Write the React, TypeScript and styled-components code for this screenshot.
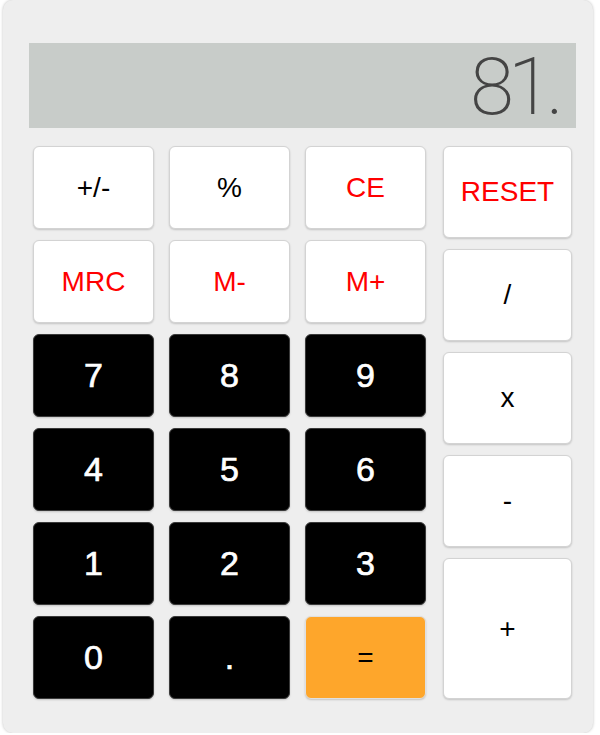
import React, { FC } from 'react'
import styled, { createGlobalStyle, css } from 'styled-components'

type Variant = 'light' | 'dark' | 'accent'

interface Key {
  label: string
  variant?: Variant
  red?: boolean
  tall?: boolean
}

const leftKeys: Key[] = [
  { label: '+/-' },
  { label: '%' },
  { label: 'CE', red: true },
  { label: 'MRC', red: true },
  { label: 'M-', red: true },
  { label: 'M+', red: true },
  { label: '7', variant: 'dark' },
  { label: '8', variant: 'dark' },
  { label: '9', variant: 'dark' },
  { label: '4', variant: 'dark' },
  { label: '5', variant: 'dark' },
  { label: '6', variant: 'dark' },
  { label: '1', variant: 'dark' },
  { label: '2', variant: 'dark' },
  { label: '3', variant: 'dark' },
  { label: '0', variant: 'dark' },
  { label: '.', variant: 'dark' },
  { label: '=', variant: 'accent' },
]

const rightKeys: Key[] = [
  { label: 'RESET', red: true },
  { label: '/' },
  { label: 'x' },
  { label: '-' },
  { label: '+', tall: true },
]

const App: FC = () => {
  return (
    <>
      <GlobalStyle />
      <S.Calculator>
        <S.Display>81.</S.Display>
        <S.Keypad>
          <S.MainKeys>
            {leftKeys.map((k) => (
              <S.Button key={k.label} $variant={k.variant || 'light'} $red={k.red}>
                {k.label}
              </S.Button>
            ))}
          </S.MainKeys>
          <S.SideKeys>
            {rightKeys.map((k) => (
              <S.SideButton key={k.label} $variant="light" $red={k.red} $tall={k.tall}>
                {k.label}
              </S.SideButton>
            ))}
          </S.SideKeys>
        </S.Keypad>
      </S.Calculator>
    </>
  )
}

const GlobalStyle = createGlobalStyle`
  html, body {
    margin: 0;
    background: #ffffff;
  }
`

const variants = {
  light: css`
    background: #ffffff;
    border-color: #d3d3d3;
    color: #000000;
    font-size: 28px;
  `,
  dark: css`
    background: #000000;
    border-color: #3a3a3a;
    color: #ffffff;
    font-size: 34px;
    -webkit-text-stroke: 0.7px #ffffff;
  `,
  accent: css`
    background: #fea62b;
    border-color: #e0e0e0;
    color: #000000;
    font-size: 28px;
  `,
}

const S = {
  Calculator: styled.div`
    box-sizing: border-box;
    width: 590px;
    height: 733px;
    margin-left: 3px;
    padding: 43px 17px 0 26px;
    background: #eeeeee;
    border-radius: 10px;
    box-shadow: 0 0 3px rgba(0, 0, 0, 0.25);
  `,
  Display: styled.div`
    height: 85px;
    padding-right: 18px;
    background: #c8ccc9;
    color: #444444;
    font-family: Roboto, 'Liberation Sans', sans-serif;
    font-weight: 200;
    font-size: 80px;
    letter-spacing: -6px;
    line-height: 88px;
    text-align: right;
  `,
  Keypad: styled.div`
    display: flex;
    align-items: flex-start;
    margin-top: 18px;
    padding-left: 4px;
  `,
  MainKeys: styled.div`
    display: grid;
    grid-template-columns: repeat(3, 121px);
    grid-auto-rows: 83px;
    column-gap: 15px;
    row-gap: 11px;
  `,
  SideKeys: styled.div`
    display: flex;
    flex-direction: column;
    gap: 11px;
    width: 129px;
    margin-left: 17px;
  `,
  Button: styled.button<{ $variant: Variant; $red?: boolean }>`
    box-sizing: border-box;
    display: flex;
    align-items: center;
    justify-content: center;
    padding: 0;
    border: 1px solid;
    border-radius: 6px;
    box-shadow: 0 1px 2px rgba(0, 0, 0, 0.18);
    font-family: 'Liberation Sans', Arial, sans-serif;
    font-weight: normal;
    cursor: pointer;
    ${(p) => variants[p.$variant]}
    ${(p) => p.$red && 'color: #ff0000;'}
  `,
  SideButton: styled.button<{ $variant: Variant; $red?: boolean; $tall?: boolean }>`
    box-sizing: border-box;
    display: flex;
    align-items: center;
    justify-content: center;
    height: ${(p) => (p.$tall ? 141 : 92)}px;
    padding: 0;
    border: 1px solid;
    border-radius: 6px;
    box-shadow: 0 1px 2px rgba(0, 0, 0, 0.18);
    font-family: 'Liberation Sans', Arial, sans-serif;
    cursor: pointer;
    ${(p) => variants[p.$variant]}
    ${(p) => p.$red && 'color: #ff0000;'}
  `,
}

export default App
